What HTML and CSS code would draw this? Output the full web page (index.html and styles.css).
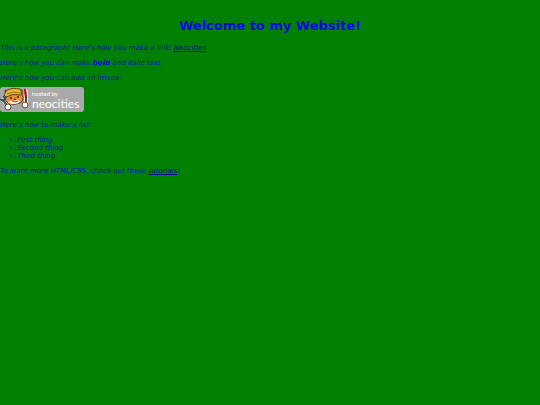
FILE: index.html
```html
<!DOCTYPE html>
<html lang="en">
<head>
    <meta charset="UTF-8">
    <meta name="viewport" content="width=device-width, initial-scale=1.0">
    <title>The web site of my dreams</title>
    <link rel="stylesheet" href="styles.css">
</head>
<body>

    <h1>Welcome to my Website!</h1>

    <p>This is a paragraph! Here's how you make a link: <a href="https://neocities.org">Neocities</a>.</p>

    <p>Here's how you can make <strong>bold</strong> and <em>italic</em> text.</p>

    <p>Here's how you can add an image:</p>

    <div class="badge">
        <!-- cat with a wrench and a paintbrush -->
        <svg class="cat" viewBox="0 0 30 25" aria-hidden="true">
            <path d="M3 13 L9 20" stroke="#f4f4ee" stroke-width="4" stroke-linecap="round"/>
            <path d="M26 4 L26 18" stroke="#f4f4ee" stroke-width="4" stroke-linecap="round"/>
            <path d="M3 13 L8 20" stroke="#4d6266" stroke-width="2.4" stroke-linecap="round"/>
            <path d="M0 12 L3 14 L5 11 L3 9" fill="none" stroke="#344b50" stroke-width="1.6"/>
            <path d="M25 3 L26 10" stroke="#a51f1c" stroke-width="2.4" stroke-linecap="round"/>
            <path d="M26 10 L26 17" stroke="#402c22" stroke-width="1.8"/>
            <path d="M6 10 L5 3 L9 4 Q13 1 18 3 L22 3 L22 8 Q25 13 20 16 Q14 19 8 16 Q4 14 6 10 Z" fill="#ee8c38" stroke="#5d3b16" stroke-width="1"/>
            <path d="M4 8 L7 3 Q13 0 20 2 L22 6 L21 8 Q13 6 6 10 Z" fill="#e5b83a" stroke="#5d4715" stroke-width="1"/>
            <path d="M7 7 Q13 4 21 6" fill="none" stroke="#86601c" stroke-width="0.8"/>
            <path d="M8 15 Q11 13 14 14 Q18 12 20 14 Q19 17 14 17 Q9 17 8 15 Z" fill="#fff3df"/>
            <path d="M11 10 V12 M18 9 V11" stroke="#2b211b" stroke-width="1.4"/>
            <path d="M14 12 L16 12 L15 13 Z M12 14 L15 15 L18 14" fill="none" stroke="#6b2a1c" stroke-width="0.8"/>
            <circle cx="8" cy="20" r="3" fill="#fff" stroke="#5d3b16" stroke-width="0.9"/>
            <circle cx="25" cy="18" r="3" fill="#fff" stroke="#5d3b16" stroke-width="0.9"/>
        </svg>
        <div class="badge-text">
            <span class="hosted">hosted by</span>
            <span class="brand">neocities</span>
        </div>
    </div>

    <p>Here's how to make a list:</p>

    <ul>
        <li>First thing</li>
        <li>Second thing</li>
        <li>Third thing</li>
    </ul>

    <p>To learn more HTML/CSS, check out these <a href="https://neocities.org/tutorials">tutorials</a>!</p>

</body>
</html>
```

FILE: styles.css
```css
body {
    margin: 0;
    background-color: green;
    color: #0818B0;
    font-family: Verdana, "DejaVu Sans", sans-serif;
    font-size: 7px;
    font-style: italic;
    line-height: 8px;
}

h1 {
    margin: 18px 0 10px;
    color: #0808E0;
    font-size: 13px;
    font-style: normal;
    line-height: 16px;
    text-align: center;
}

p {
    margin: 7px 0;
}

a {
    color: #080C98;
}

strong {
    color: #0808E0;
}

ul {
    margin: 7px 0;
    padding-left: 17px;
}

li::marker {
    content: "•\00a0\00a0";
}

/* Neocities badge */
.badge {
    display: flex;
    width: 84px;
    height: 25px;
    margin: -2px 0 9px;
    background-color: #A9A9A9;
    border-radius: 3px;
}

.cat {
    flex: none;
    width: 30px;
    height: 25px;
}

.badge-text {
    display: flex;
    flex-direction: column;
    padding: 3px 0 0 2px;
    color: white;
    font-family: Lato, "Open Sans", sans-serif;
    font-style: normal;
}

.hosted {
    font-size: 6px;
    line-height: 8px;
}

.brand {
    font-size: 12px;
    line-height: 12px;
}
```
